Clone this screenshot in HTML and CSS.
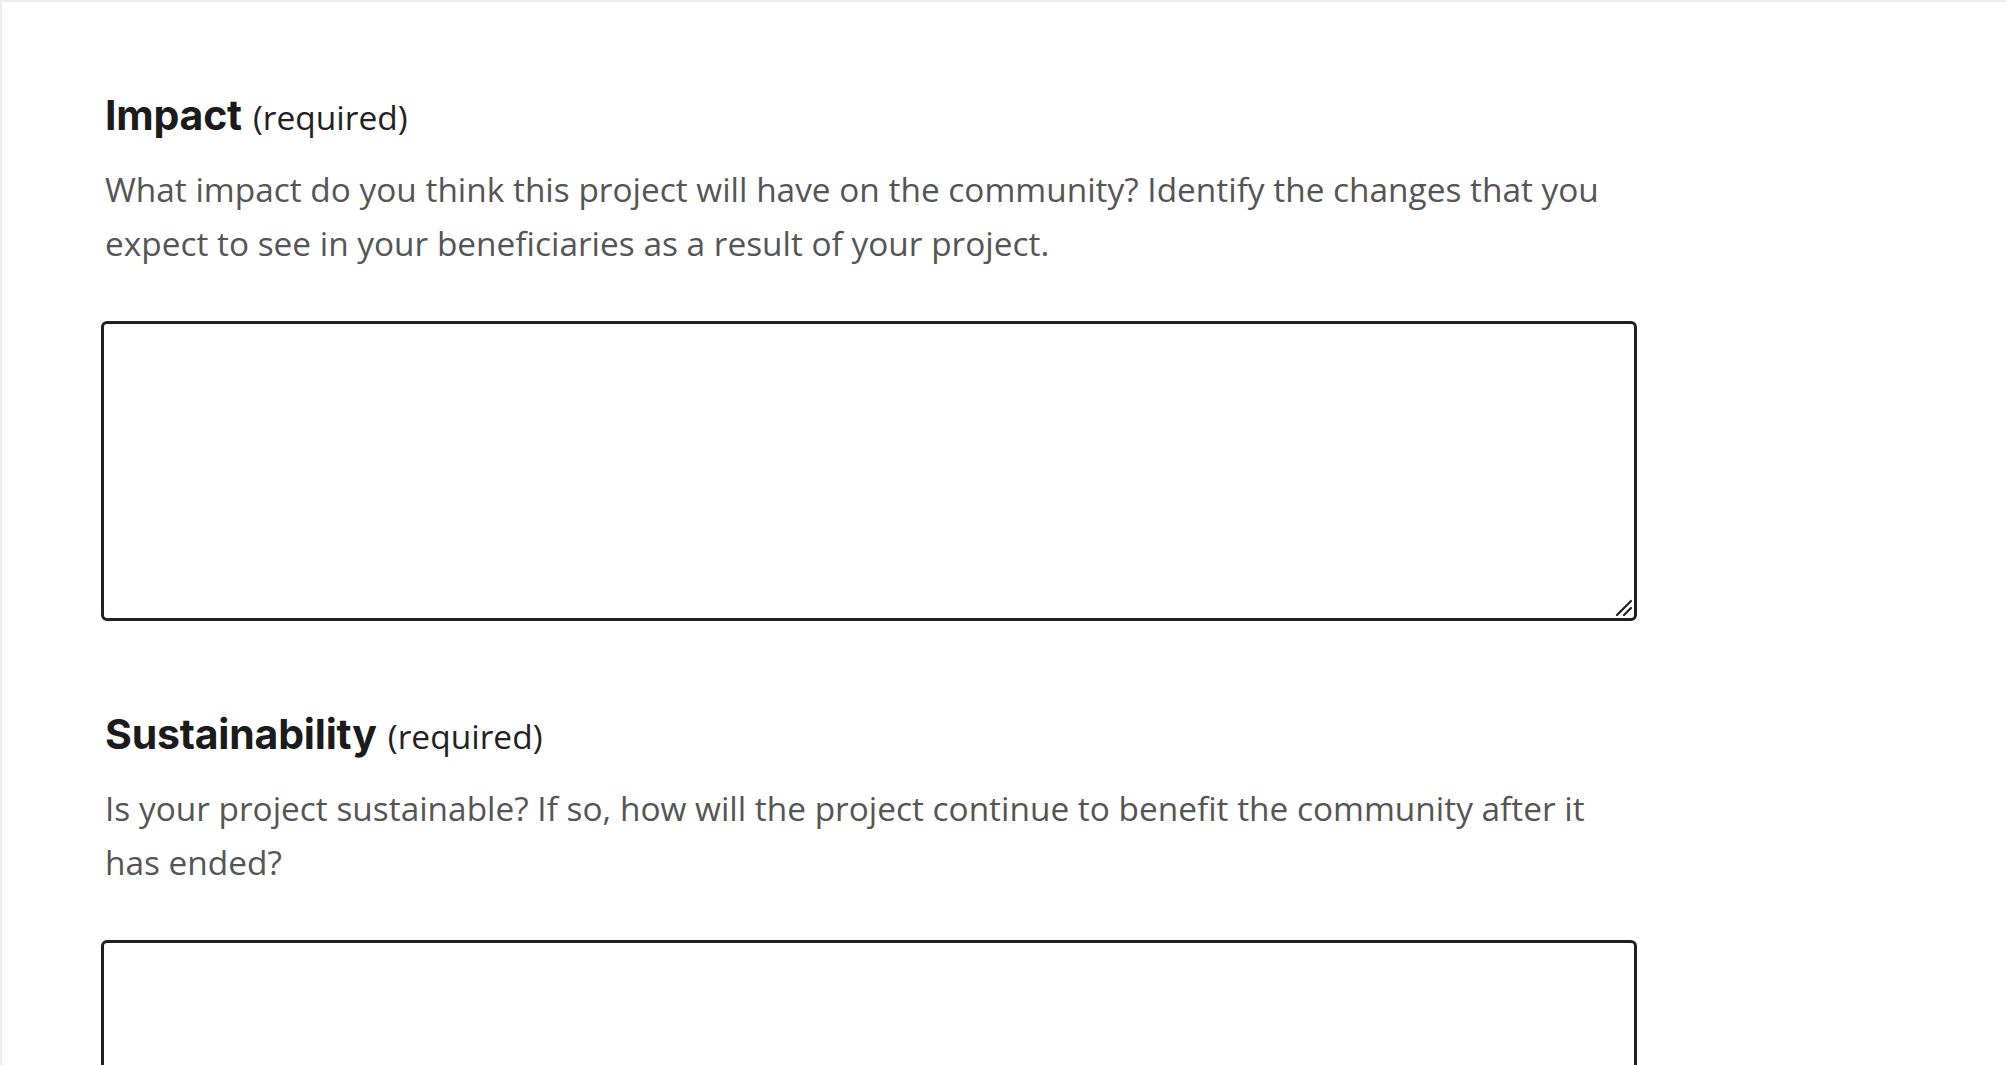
FILE: index.html
```html
<!DOCTYPE html>
<html lang="en">
<head>
<meta charset="utf-8">
<title>Application form</title>
<link rel="stylesheet" href="styles.css">
</head>
<body>
<main class="card">
  <section class="field">
    <label class="label" for="impact"><span class="label-title">Impact</span><span class="label-req">(required)</span></label>
    <p class="desc">What impact do you think this project will have on the community? Identify the changes that you expect to see in your beneficiaries as a result of your project.</p>
    <div class="input-wrap">
      <textarea class="input" id="impact"></textarea>
      <svg class="grip" viewBox="0 0 20 20" aria-hidden="true"><path d="M19 5 L5 19 M19 12 L12 19" stroke="#222" stroke-width="2.2" stroke-linecap="round" fill="none"/></svg>
    </div>
  </section>
  <section class="field">
    <label class="label" for="sustain"><span class="label-title">Sustainability</span><span class="label-req">(required)</span></label>
    <p class="desc">Is your project sustainable? If so, how will the project continue to benefit the community after it has ended?</p>
    <div class="input-wrap">
      <textarea class="input" id="sustain"></textarea>
      <svg class="grip" viewBox="0 0 20 20" aria-hidden="true"><path d="M19 5 L5 19 M19 12 L12 19" stroke="#222" stroke-width="2.2" stroke-linecap="round" fill="none"/></svg>
    </div>
  </section>
</main>
</body>
</html>
```
FILE: styles.css
```css
html, body {
  margin: 0;
  padding: 0;
  background: #ffffff;
}

.card {
  box-sizing: border-box;
  min-height: 100vh;
  border-top: 2px solid #ececec;
  border-left: 2px solid #ececec;
  padding: 89px 0 0 99px;
  display: flex;
  flex-direction: column;
  gap: 89px;
}

.field {
  display: flex;
  flex-direction: column;
  width: 1536px;
}

.label {
  display: flex;
  align-items: baseline;
  gap: 11px;
  color: #1b1b1b;
  line-height: 1.2;
  padding-left: 4px;
}

.label-title {
  font-family: "Inter", "Lato", sans-serif;
  font-weight: 700;
  font-size: 41px;
  letter-spacing: -0.2px;
}

.label-req {
  font-family: "Open Sans", sans-serif;
  font-weight: 400;
  font-size: 33.5px;
  color: #222222;
}

.desc {
  margin: 22px 0 0 0;
  padding-left: 4px;
  font-family: "Open Sans", sans-serif;
  font-size: 33.4px;
  line-height: 54px;
  color: #555555;
}

.input-wrap {
  position: relative;
  margin-top: 51px;
  width: 1536px;
  height: 300px;
}

.input {
  box-sizing: border-box;
  display: block;
  width: 100%;
  height: 100%;
  border: 3px solid #202020;
  border-radius: 6px;
  background: #ffffff;
  resize: none;
  font-family: "Open Sans", sans-serif;
  font-size: 28px;
}

.grip {
  position: absolute;
  right: 5px;
  bottom: 5px;
  width: 20px;
  height: 20px;
  pointer-events: none;
}
```
